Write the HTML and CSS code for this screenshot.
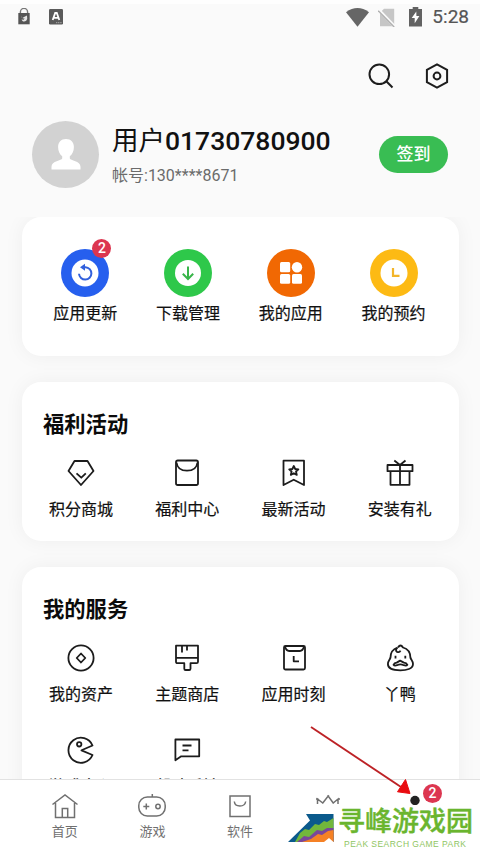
FILE: index.html
```html
<!DOCTYPE html>
<html lang="zh-CN">
<head>
<meta charset="utf-8">
<title>我的</title>
<link rel="stylesheet" href="styles.css">
</head>
<body>
<div class="phone">
  <header class="status">
    <div class="status-left">
      <svg width="14" height="18" viewBox="0 0 14 18"><path d="M3.4 6V4a3.6 3.6 0 0 1 7.2 0v2" fill="none" stroke="#777" stroke-width="1.4"/><path d="M1.3 5h11.4v11.3H1.3z" fill="#555"/><path d="M4 7.500q-.3 2 1.500 2.500L7 9l3-1.500q.8 3.500-.8 5.200-2 1.500-3.700.3l-1-1.500 2.200.3 1-1.300Q4.500 11 4 7.500z" fill="#e4e4e4"/></svg>
      <svg width="14" height="16" viewBox="0 0 14 16"><rect width="14" height="15.5" rx="1.2" fill="#5a5a5a"/><path d="M3.7 11 6.2 4h1.6l2.5 7M5 8.8h4" fill="none" stroke="#fff" stroke-width="1.8"/><path d="M7 13.7h6" stroke="#aaa" stroke-dasharray="1.2 .6"/></svg>
    </div>
    <div class="status-right">
      <svg width="23" height="19" viewBox="0 0 23 19"><path d="M0 4.2Q11.5-4 23 4.2L11.5 18.7z" fill="#666"/></svg>
      <svg width="18" height="19" viewBox="0 0 18 19"><path d="M6 .8h10.2v17.4H2V4.8z" fill="#c6c6c6"/><path d="M0 1.1 17.2 19" stroke="#fafafa" stroke-width="3"/><path d="M.2 2.8 16.2 19" stroke="#b0b0b0" stroke-width="1.4"/></svg>
      <svg width="13" height="20" viewBox="0 0 13 20"><path d="M3.7 0h5.6v2H13v17.5H0V2h3.7z" fill="#626262"/><path d="M7.3 4.5 2.7 11h3v5.2L10.4 9h-3z" fill="#fff"/></svg>
      <span class="clock">5:28</span>
    </div>
  </header>

  <div class="tools">
    <svg width="26" height="26" viewBox="0 0 26 26"><circle cx="11.3" cy="11.3" r="9.8"/><path d="m18.3 18.3 6.2 6.2"/></svg>
    <svg width="24" height="26" viewBox="0 0 24 26"><path d="m12 1.4 10.1 5.4v12.4L12 24.6 1.9 19.2V6.8z"/><circle cx="12" cy="13" r="3.4"/></svg>
  </div>

  <section class="profile">
    <div class="avatar"><svg width="30" height="31" viewBox="0 0 30 31"><path d="M15 0c5 0 7.900 3.500 7.900 8 0 4.200-1.700 7.600-4.100 9.300v2.200c.4 2 10.700 2.300 10.700 8.200v2.800H.500v-2.800c0-5.900 10.300-6.200 10.700-8.200v-2.200C8.800 15.600 7.100 12.200 7.100 8c0-4.500 2.900-8 7.900-8z" fill="#fff"/></svg></div>
    <div class="who">
      <div class="name">用户<b>01730780900</b></div>
      <div class="account">帐号:130****8671</div>
    </div>
    <div class="sign">签到</div>
  </section>

  <main class="cards">
    <section class="card quick">
      <div class="item"><div class="disc blue">
        <svg width="48" height="48" viewBox="0 0 48 48"><circle cx="24" cy="24" r="13.500" fill="#fff"/><path d="M22.500 18.200h2a6.200 6.200 0 1 1-6.500 6.600" fill="none" stroke="#3260dc" stroke-width="2"/><path d="m19 18.200 5-3.500v7z" fill="#3260dc"/></svg><i class="badge">2</i></div><span>应用更新</span></div>
      <div class="item"><div class="disc green">
        <svg width="48" height="48" viewBox="0 0 48 48"><circle cx="24" cy="24" r="13" fill="#fff"/><path d="M24 17.500v12.500m-5.200-5.200 5.200 5.200 5.200-5.200" fill="none" stroke="#38b54a" stroke-width="2"/></svg></div><span>下载管理</span></div>
      <div class="item"><div class="disc orange">
        <svg width="48" height="48" viewBox="0 0 48 48" fill="#fff"><rect x="13" y="13" width="10.200" height="10.200" rx="1.500"/><circle cx="30" cy="18.200" r="5.200"/><rect x="13" y="25" width="10.200" height="9.800" rx="1.500"/><rect x="25" y="25" width="10" height="9.800" rx="1.500"/></svg></div><span>我的应用</span></div>
      <div class="item"><div class="disc yellow">
        <svg width="48" height="48" viewBox="0 0 48 48"><circle cx="24" cy="24" r="13.500" fill="#fff"/><path d="M23 19v7.800h6.500" fill="none" stroke="#f3b52a" stroke-width="2.200"/></svg></div><span>我的预约</span></div>
    </section>

    <section class="card">
      <h2>福利活动</h2>
      <div class="grid">
        <div class="item"><svg width="28" height="28" viewBox="0 0 28 28"><path d="M7.500 2h13l6 10L14 26 1.500 12z"/><path d="m9.500 14.300 4.800 4.400 4.500-4.400"/></svg><span>积分商城</span></div>
        <div class="item"><svg width="28" height="28" viewBox="0 0 28 28"><rect x="3" y="1.500" width="22" height="24.500" rx="1.800"/><path d="M3.500 3.500q1 8.200 10.500 8.200T24.500 3.500"/></svg><span>福利中心</span></div>
        <div class="item"><svg width="28" height="28" viewBox="0 0 28 28"><path d="M3.500 1.700H24V26L13.700 20.700 3.500 26z"/><path d="m13.800 7 1.400 3 3.200.3-2.400 2.200.8 3.400-3-1.700-3 1.700.8-3.400-2.400-2.200 3.200-.3z"/></svg><span>最新活动</span></div>
        <div class="item"><svg width="28" height="28" viewBox="0 0 28 28"><path d="M1.500 6h25v6.200h-25zM4.500 12.500v13.300h19V12.500M14 6v19.500M8.300 1.500 14 6l5.500-4.500"/></svg><span>安装有礼</span></div>
      </div>
    </section>

    <section class="card services">
      <h2>我的服务</h2>
      <div class="grid">
        <div class="item"><svg width="28" height="28" viewBox="0 0 28 28"><circle cx="14" cy="14" r="12.600"/><path d="m14 9.500 4.300 4.500-4.300 4.500L9.700 14z"/></svg><span>我的资产</span></div>
        <div class="item"><svg width="28" height="28" viewBox="0 0 28 28"><path d="M3 1.700h22v16q0 1.500-1.500 1.500h-6v5.500q0 1.300-1.300 1.300h-3.600q-1.300 0-1.300-1.300v-5.500h-6.800Q3 19.200 3 17.700zM3 13.800h22M9 2v6.500M14 2v4.500"/></svg><span>主题商店</span></div>
        <div class="item"><svg width="28" height="28" viewBox="0 0 28 28"><rect x="4" y="2" width="21" height="23.500" rx="1.500"/><path d="M5 2.500q1.200 4.500 4.200 4.500h10.600Q22.800 7 24 2.500M13.700 12v5.300H19"/></svg><span>应用时刻</span></div>
        <div class="item"><svg width="28" height="28" viewBox="0 0 28 28"><path d="M11.500 3.500Q4.500 6 4.500 13.500c-.3 2-2.600 3.300-2.600 6.500 0 5 6.600 6.300 12.500 6.300S27 25 27 20c0-3.200-2.300-4.500-2.600-6.500Q24.300 5.500 17 3.500 14.500-.5 12 3.500M11.500 3.700q-2.800 2.500-.4 4.200 2.500.9 3.400-1.200"/><path d="M7.500 20.800q.8-1.900 3.200-2.200l3.400-2 3.800 2q2.600.3 3.500 2.200-1 1.400-3.600.4-3.400-1.500-6.800 0-2.500 1-3.500-.4zM9.500 11.700v2.800M19.300 11.700v2.800"/></svg><span>丫鸭</span></div>
        <div class="item"><svg width="28" height="28" viewBox="0 0 28 28"><path d="M25.500 9.500A12.500 12.500 0 1 0 25.500 19L14.500 14.300z"/><circle cx="12.200" cy="8.300" r="2.200"/></svg><span>游戏中心</span></div>
        <div class="item"><svg width="28" height="28" viewBox="0 0 28 28"><path d="M2.400 3.500h23.800v16.800H8.200l-5.800 3.900zM9.500 9.500h9M9.500 14.400h6"/></svg><span>帮助反馈</span></div>
      </div>
    </section>
  </main>

  <nav class="tabs">
    <div class="tab"><svg width="28" height="28" viewBox="0 0 28 28"><path d="M1.500 12.500 14 3l12.500 9.500M4.500 11v14.500h19V11M11.300 25.500v-9h5.400v9"/></svg><span>首页</span></div>
    <div class="tab"><svg width="28" height="28" viewBox="0 0 28 28"><rect x=".8" y="5" width="26.400" height="19" rx="8.500"/><path d="M14.300 2v3M5.300 14.500h6M8.300 11.500v6"/><circle cx="20" cy="14.500" r="2.200"/></svg><span>游戏</span></div>
    <div class="tab"><svg width="28" height="28" viewBox="0 0 28 28"><rect x="4" y="4" width="20" height="20.500"/><path d="M8.300 9.500q.5 4.500 5.600 4.500t5.800-4.500"/></svg><span>软件</span></div>
    <div class="tab crown"><svg width="28" height="12" viewBox="0 0 28 12"><path d="M3.500 12V7l5.300 4 5.400-7 5 7 4.800-4v5M2 7h2.500M13.200 4h2M23.500 7H26"/></svg></div>
    <div class="tab me"><svg width="12" height="11" viewBox="0 0 12 11"><circle cx="6" cy="6.500" r="4.700"/></svg><i class="badge">2</i></div>
  </nav>

  <svg class="arrow" width="106" height="80" viewBox="0 0 106 80"><path d="M1 2 91 62" stroke="#bd2226" stroke-width="1.900"/><path d="m95.500 54.500 4.500 14-12.500-1.700z" fill="#e90c10" stroke="#e90c10"/></svg>
  <div class="watermark">
    <svg width="46" height="30" viewBox="0 0 46 30"><path d="M18 1h27.500v28H0L22 7.500z" fill="#0b5a8c"/><path d="m7 29 5-9 5-4 4 1 6-6 4 1 5-4 3 1 6.500-4V29z" fill="#72b73b"/><path d="m9 29 7-6 5 1 8-7 5 1 5-3 6.500 0v14z" fill="#79479a"/><path d="m14 29 9-3 7-5 4 1 6-4 5.500-1v12z" fill="#f58125"/><path d="m36 29 5-4 4.500 4z" fill="#fff"/></svg>
    <div class="mark-text"><div class="mark-cn">寻峰游戏园</div><div class="mark-en">PEAK SEARCH GAME PARK</div></div>
  </div>
</div>
</body>
</html>
```
FILE: styles.css
```css
* { box-sizing: border-box; }
body { margin: 0; font-family: Roboto, "Noto Sans CJK SC", sans-serif; color: #111; background: #fafafa; }
.phone { position: relative; width: 480px; height: 854px; overflow: hidden; display: flex; flex-direction: column; background: #fafafa; border-top: 4px solid #fefefe; }
svg { display: block; flex: none; }
.status { height: 26px; padding: 0 11px 0 17px; display: flex; justify-content: space-between; align-items: center; flex: none; }
.status-left { display: flex; align-items: center; gap: 18px; }
.status-right { display: flex; align-items: center; gap: 13px; }
.status-right svg + svg { margin-left: -4px; }
.status-right svg:nth-child(3) { margin-left: 0; }
.clock { font-size: 19px; line-height: 24px; font-weight: 400; color: #555; margin-left: -3px; -webkit-text-stroke: .2px #555; }
.tools { height: 92px; padding: 33px 31px 0 0; display: flex; justify-content: flex-end; gap: 31px; flex: none; }
.tools svg { fill: none; stroke: #1d1d1d; stroke-width: 2; }
.profile { height: 95px; padding: 0 32px; display: flex; flex: none; }
.avatar { width: 67px; height: 67px; margin-top: -1px; border-radius: 50%; background: #d2d2d2; display: flex; justify-content: center; align-items: center; }
.who { flex: 1; padding-left: 13px; }
.name { padding-top: 1px; font-size: 26.500px; line-height: 36px; white-space: nowrap; }
.name b { font-weight: 500; font-size: 26.500px; }
.account { margin-top: 7px; font-size: 16px; line-height: 20px; color: #6b6b6b; }
.sign { width: 69px; height: 37px; margin: 14px 0 0; border-radius: 19px; background: #39bd53; color: #fff; font-size: 17px; line-height: 37px; font-weight: 500; text-align: center; }
.cards { flex: 1; min-height: 0; overflow: hidden; padding: 0 21px 0 22px; display: flex; flex-direction: column; gap: 26px; }
.card { background: #fff; border-radius: 19px; height: 159px; flex: none; padding: 0 6px; box-shadow: 0 0 20px rgba(0,0,0,.05); }
.quick { height: 139px; padding: 32px 14px 0 12px; display: grid; grid-template-columns: repeat(4, 1fr); }
.item { display: flex; flex-direction: column; align-items: center; font-size: 16px; line-height: 24px; white-space: nowrap; -webkit-text-stroke: .2px #111; }
.disc { position: relative; width: 48px; height: 48px; border-radius: 50%; margin-bottom: 5px; }
.blue { background: #265fee; }
.green { background: #2ec84a; }
.orange { background: #f16803; }
.yellow { background: #fdba14; }
.badge { position: absolute; right: -2px; top: -10px; width: 19px; height: 19px; border-radius: 50%; background: #dc3650; color: #fff; font: 500 14px/19px Roboto, sans-serif; text-align: center; -webkit-text-stroke: 0; }
h2 { margin: 0; padding: 28px 15px 0; font-size: 21.300px; line-height: 30px; font-weight: 700; color: #0b0b0b; }
.grid { display: grid; grid-template-columns: repeat(4, 1fr); grid-auto-rows: 92px; padding-top: 19px; }
.grid svg { fill: none; stroke: #1c1c1c; stroke-width: 1.800; stroke-linejoin: round; margin-bottom: 11px; }
.services { height: 300px; }
.tabs { height: 75px; flex: none; position: relative; background: #fff; border-top: 1px solid #e2e2e2; padding: 12px 21px 0; display: grid; grid-template-columns: repeat(5, 1fr); }
.tab { position: relative; display: flex; flex-direction: column; align-items: center; font-size: 13px; line-height: 20px; color: #707070; }
.tab svg { fill: none; stroke: #707070; stroke-width: 1.500; margin-bottom: 2px; }
.me svg { margin-top: 2px; fill: #222; stroke: none; }
.me .badge { right: 17px; top: -8px; }
.arrow { position: absolute; left: 310px; top: 721px; }
.watermark { position: absolute; left: 288px; top: 800px; display: flex; align-items: flex-start; }
.watermark > svg { margin-top: 9px; }
.mark-text { margin-left: 4px; padding-top: 2px; }
.mark-cn { font-size: 27px; line-height: 33px; font-weight: 500; color: #6ab52e; white-space: nowrap; -webkit-text-stroke: .4px #6ab52e; }
.mark-en { padding-left: 6px; font: 8.500px/10px "Liberation Sans", sans-serif; letter-spacing: .46px; color: #8fc562; white-space: nowrap; }
```
